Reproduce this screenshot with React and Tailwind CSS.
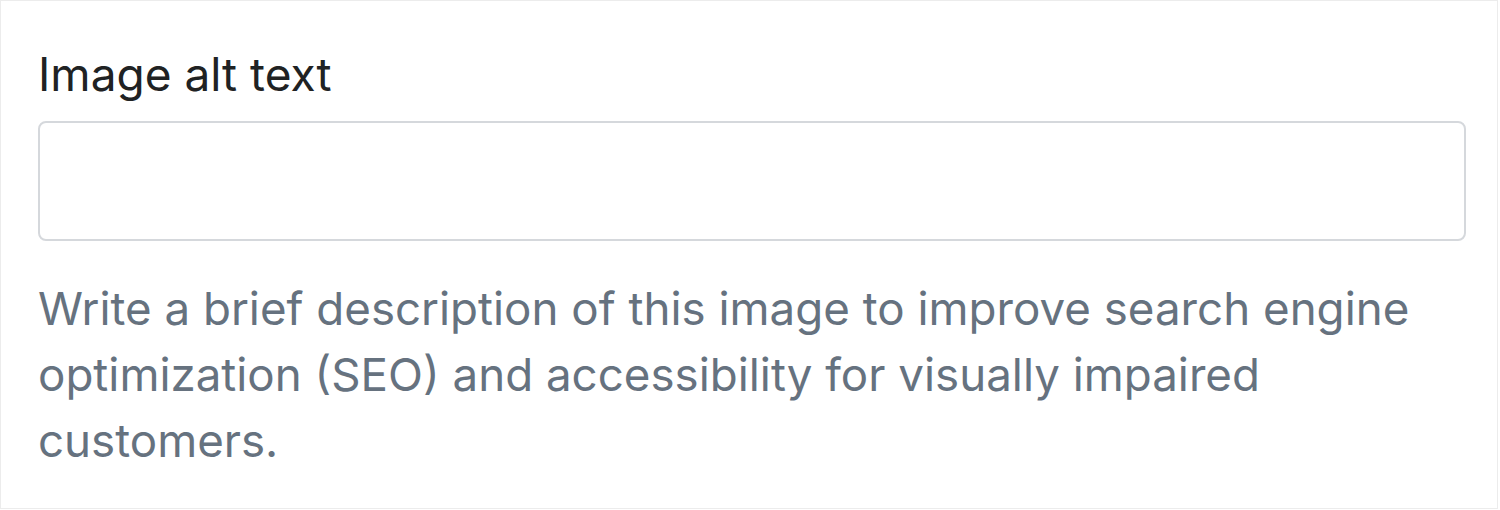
export default function App() {
  return (
    <div className="h-[510px] w-[1500px] bg-white" style={{ fontFamily: 'Inter, "Noto Sans", sans-serif' }}>
      <div className="h-[509px] w-[1498px] border border-[#ececec] bg-white pl-[37px] pr-[31px] pt-[45px]">
        <label className="block text-[46px] leading-[56px] text-[#202223]">Image alt text</label>
        <div className="mt-[19px] h-[120px] w-full rounded-[8px] border-2 border-[#d5d8dc] bg-white" />
        <p className="mt-[35px] max-w-[1420px] text-[45.7px] leading-[66px] text-[#66727f]">
          Write a brief description of this image to improve search engine optimization (SEO) and accessibility for visually impaired customers.
        </p>
      </div>
    </div>
  )
}
